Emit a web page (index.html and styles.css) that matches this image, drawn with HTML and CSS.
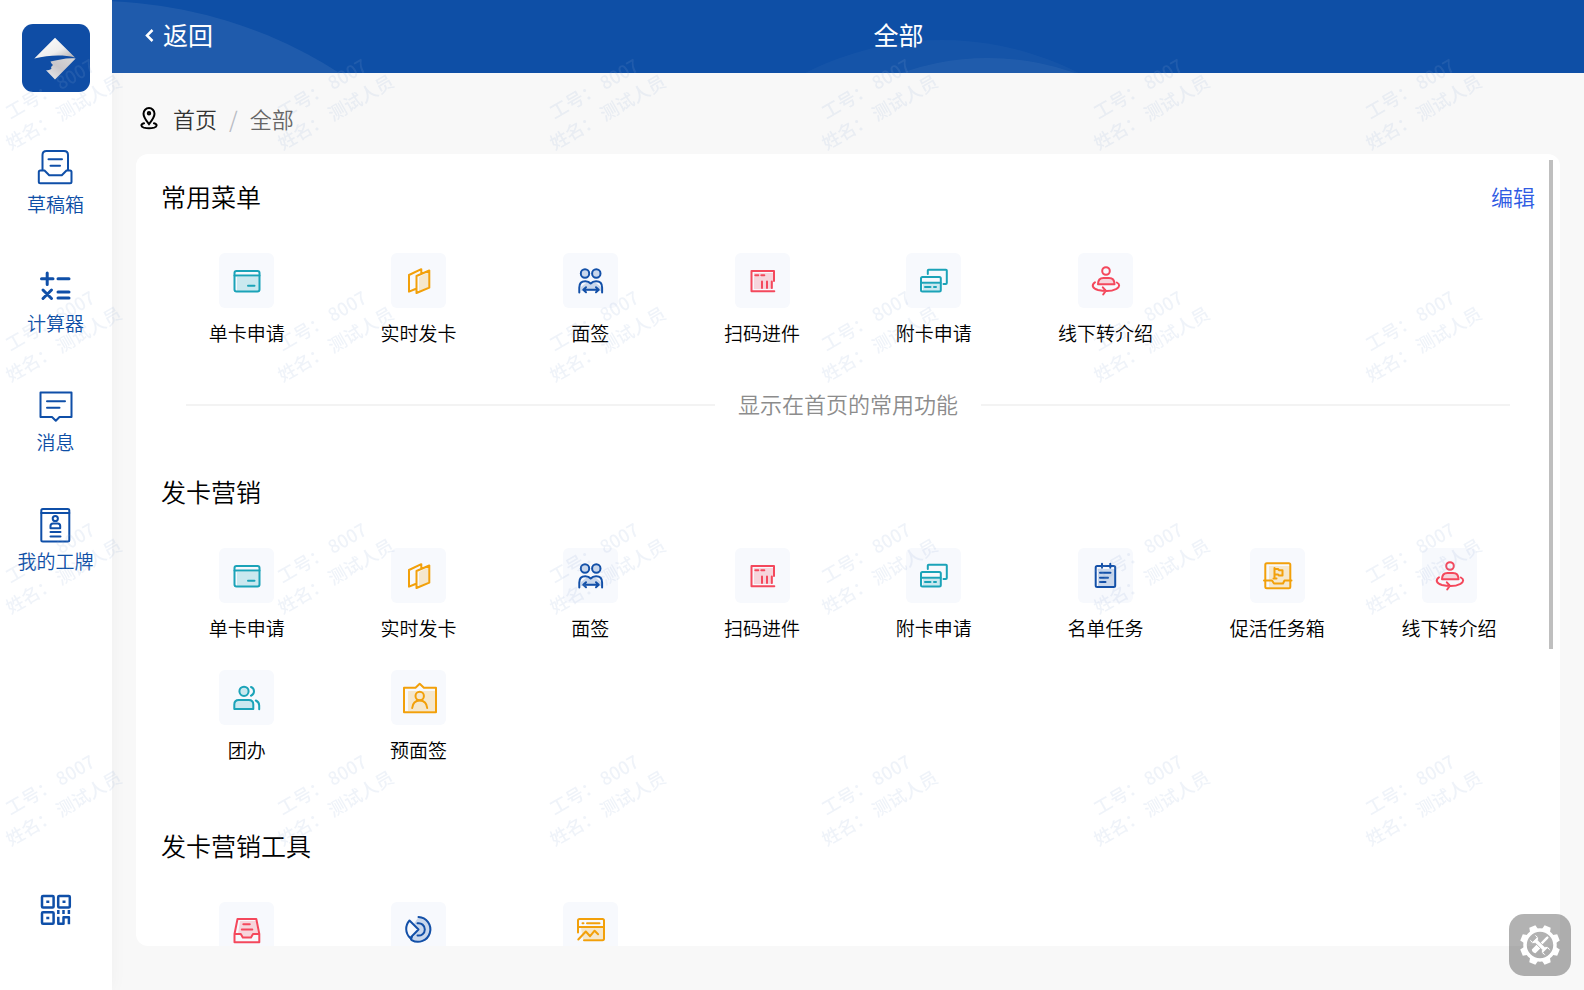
FILE: index.html
```html
<!DOCTYPE html>
<html lang="zh-CN">
<head>
<meta charset="utf-8">
<title>全部</title>
<link rel="stylesheet" href="styles.css">
</head>
<body>
<svg class="sprite" aria-hidden="true">
  <symbol id="i-card" viewBox="0 0 55 55">
    <rect class="tint" x="18" y="24" width="22" height="14"/>
    <rect x="15.5" y="18" width="25" height="20.5" rx="2"/><path d="M15.5 22.5h25M29 32.7h6.500"/>
  </symbol>
  <symbol id="i-fold" viewBox="0 0 55 55">
    <path class="tint" d="M28 24l10-5v15l-10 5z"/>
    <path d="M24.500 36l-6.500 2.700V22l12.300-5.800V20M25.500 23l12.800-5.500v17.200L25.500 40z"/>
  </symbol>
  <symbol id="i-sign" viewBox="0 0 55 55">
    <path class="tint" d="M18 38v-4l5-4h10l5 4v4z"/><circle class="tinted" cx="22" cy="20.500" r="4.200"/><circle class="tinted" cx="33.300" cy="20.500" r="4.200"/>
    <path d="M16.300 39.500V34.500q0-6.200 6-6.200q3.500 0 5.400 2.200q1.900-2.200 5.400-2.200q6 0 6 6.200v5M20.500 36.700h15M23 34.200l-2.700 2.500 2.700 2.500M33 34.200l2.700 2.500-2.700 2.500"/>
  </symbol>
  <symbol id="i-scan" viewBox="0 0 55 55">
    <path class="tint" d="M19 20h19v16H19z"/>
    <path d="M39.300 38.300H16.500V18H39v10M20.300 22.300h3M26.300 22.300h3M27 28.500V35M32 28.500V35M36.800 28.500V35"/>
  </symbol>
  <symbol id="i-cards" viewBox="0 0 55 55">
    <path class="tint" d="M17 31h17v7H17z"/>
    <path d="M21.800 21V17.500q0-.8.8-.8H40q.8 0 .8.800V30q0 1-1 1h-2.300M15 29.800h19.500M19 34h5.500M28 34h2"/><rect x="15" y="24" width="19.800" height="14.500" rx="1.500"/>
  </symbol>
  <symbol id="i-refer" viewBox="0 0 55 55">
    <circle cx="28" cy="18" r="3.800"/><path class="tinted" d="M20 31.300c0-4.500 2.500-6.300 5.500-6.300h5.500c3 0 5.500 1.800 5.500 6.300z"/>
    <path d="M17 29.300c-4 3-2.500 6.200 3 7.700 6.500 1.600 14 1.200 18.500-1.200 3.500-2 3.500-4.500 .3-6.300M24.800 34.300l3 3.400-2.600 3.800"/>
  </symbol>
  <symbol id="i-list" viewBox="0 0 55 55">
    <path class="tint" d="M20 21h17v17H20z"/><rect x="17.700" y="18" width="19.500" height="21" rx="1.500"/><path d="M24 15.800v4M32.300 15.800v4M22 24.700h10.500M22 29.700h8M22 34h5.500"/>
  </symbol>
  <symbol id="i-flag" viewBox="0 0 55 55">
    <path class="tint" d="M19 18h21v21H19z"/><rect x="15.300" y="15.300" width="25" height="25" rx="1.500"/>
    <path d="M14 32.500h8l2 3h9l1.500-3H41.500M24.500 20V30.500M23.500 30.500h3M24.500 21h3.500l1 1.200h3.500v5.300h-3.500l-1-1H24.500"/>
  </symbol>
  <symbol id="i-group" viewBox="0 0 55 55">
    <circle class="tinted" cx="25" cy="21.300" r="4.600"/><path class="tinted" d="M15.300 39V34.500q0-4.500 4.500-4.500h10q4.500 0 4.500 4.500V39z"/><path d="M32 17c4 1.300 4 7.300 0 8.700M36.800 30.500q3.400 1.500 3.400 5v3.800"/>
  </symbol>
  <symbol id="i-pre" viewBox="0 0 55 55">
    <path class="tint" d="M17 21h27v20H17z"/><path d="M13 17.700h11.500l4.200-4 4.200 4H45v24.600H13z"/><circle cx="28.700" cy="26" r="4.200"/><path d="M21.200 38c.5-5 3.500-7.600 7.500-7.600s7 2.600 7.500 7.600"/>
  </symbol>
  <symbol id="i-tray" viewBox="0 0 55 55">
    <path class="tint" d="M21 19h16l2 12-5 1-2 3h-8l-2-3h-3z"/><path d="M15.500 32l3-15h18.800l3 15v8.300H15.500V32h6.300l2 3.500h8.200l2-3.500h6.300M24.300 22.300h6.500M22.800 27.500h10.500"/>
  </symbol>
  <symbol id="i-pie" viewBox="0 0 55 55">
    <path class="tint" d="M27.500 15a12.500 12.500 0 1 1-7 22.500l7-10-5-5z"/><path d="M27.500 15a12.400 12.400 0 1 1-6.800 23.100M18.500 18.500c-4.500 5-4.500 12.500 .7 17.500l8.300-8.500zM26.500 21.300a6.200 6.200 0 1 1 0 12.200M21.500 33.500l-1.500 4"/>
  </symbol>
  <symbol id="i-chart" viewBox="0 0 55 55">
    <path class="tint" d="M18 26h22v11H20z"/><path d="M15 30.500V18.500q0-1.500 1.500-1.500h23q1.500 0 1.500 1.500V36.500q0 1.700-1.500 1.700H21M15 25h26M19.500 21.300h1M24 21.300h12.500M15.300 37.500l7.500-8 4.300 4.700 4.500-5.500 3.500 3.500"/>
  </symbol>
</svg>

<div class="app">
  <aside class="sidebar">
    <svg class="logo" viewBox="0 0 68 68" role="img" aria-label="logo">
      <defs>
        <linearGradient id="silver" x1="0" y1="0" x2="1" y2="1"><stop offset="0" stop-color="#fff"/><stop offset=".6" stop-color="#eee"/><stop offset="1" stop-color="#aaa8ac"/></linearGradient>
        <linearGradient id="silver2" x1="0" y1="1" x2="1" y2="0"><stop offset="0" stop-color="#eee"/><stop offset=".5" stop-color="#c9c6ca"/><stop offset="1" stop-color="#d8d8d8"/></linearGradient>
      </defs>
      <rect width="68" height="68" rx="11" fill="#0f4da5"/>
      <path fill="url(#silver)" d="M33 13.700L53 33.500C41 30.500 27 31 12.300 34.500z"/>
      <path fill="url(#silver2)" d="M53.700 34.500L33 55.500l-9-9.200c2 0 4-.5 5.500-1.500-1-1.500 0-2.500 1.500-3.800-1-1-2-2-2.500-3.500C36 36 45 33.500 53.700 34.500z"/>
    </svg>
    <nav class="side-nav">
      <button class="side-item" type="button">
        <svg class="side-icon" viewBox="0 0 38 38"><path d="M6.500 22.500V7q0-4 4-4h17.500q4 0 4 4v15.500M12.500 11.300h13.500M14.500 17.700h9.500M2.800 24q0-1.500 1.500-1.500h4.200l4.700 4.700h12.600l4.700-4.700h3.500q1.500 0 1.500 1.500v9.800q0 1.500-1.500 1.500H4.300q-1.500 0-1.500-1.500z"/></svg>
        <span>草稿箱</span>
      </button>
      <button class="side-item" type="button">
        <svg class="side-icon bold" viewBox="0 0 38 38"><path d="M5.500 11.700H17M11.200 6v11.500M22 11.700h11M7 23l8.500 8.500M15.500 23L7 31.500M22 25h11M22 31h11"/></svg>
        <span>计算器</span>
      </button>
      <button class="side-item" type="button">
        <svg class="side-icon" viewBox="0 0 38 38"><path d="M4.500 6.500h31V31H23.500l-3.700 3.700L16 31H4.500zM11 15.300h18M11 21.700h12.500"/></svg>
        <span>消息</span>
      </button>
      <button class="side-item" type="button">
        <svg class="side-icon" viewBox="0 0 38 38"><rect x="5.300" y="4" width="28" height="32.500" rx="1.500"/><path d="M5.300 8h28M14.500 27h10M14.500 31.500h10"/><circle cx="19.300" cy="13.500" r="2.600"/><path d="M14.500 23.200v-2.200q0-2.500 2.500-2.500h4.700q2.500 0 2.500 2.500v2.200z"/></svg>
        <span>我的工牌</span>
      </button>
    </nav>
    <button class="qr" type="button" aria-label="二维码">
      <svg viewBox="0 0 32 32"><rect x="2" y="2" width="11.600" height="11.600" rx="1"/><rect x="18.200" y="2" width="11.600" height="11.600" rx="1"/><rect x="2" y="18.200" width="11.600" height="11.600" rx="1"/><path d="M6.300 7.800h3M22.500 7.800h3M6.300 24h3M18.300 16v4M23.500 16v4M28.900 16v4M18.300 22.800v7h5.200v-6.500h5.400v7"/></svg>
    </button>
  </aside>

  <div class="main">
    <header class="topbar">
      <svg class="topbar-art" aria-hidden="true"><circle cx="-17" cy="452" r="451" fill-opacity=".07"/><circle cx="830" cy="340" r="300" fill-opacity=".03"/><circle cx="876" cy="318" r="260" fill-opacity=".05"/></svg>
      <button class="back" type="button"><svg viewBox="0 0 10 18"><path d="M8.500 5L3 10.500l5.500 5.500"/></svg>返回</button>
      <h1 class="page-title">全部</h1>
    </header>

    <nav class="crumbs" aria-label="breadcrumb">
      <svg viewBox="0 0 20 24"><path d="M10 18.200C7 14.500 4.500 11 4.500 7.800a5.500 5.700 0 0 1 11 0C15.500 11 13 14.500 10 18.200z"/><circle cx="10" cy="7.300" r="1.200"/><path d="M5 17.300c-3.500 1-3.300 3.300-.2 4.300 3.300.9 7.100.9 10.400 0 3.100-1 3.300-3.300-.2-4.300"/></svg>
      <a href="#">首页</a><span class="sep">/</span><span class="here">全部</span>
    </nav>

    <main class="card">
      <div class="scroll">
        <section class="group">
          <div class="group-head"><h2>常用菜单</h2><button class="edit" type="button">编辑</button></div>
          <div class="grid">
            <button class="item teal" type="button"><svg><use href="#i-card"/></svg><span>单卡申请</span></button>
            <button class="item amber" type="button"><svg><use href="#i-fold"/></svg><span>实时发卡</span></button>
            <button class="item blue" type="button"><svg><use href="#i-sign"/></svg><span>面签</span></button>
            <button class="item red" type="button"><svg><use href="#i-scan"/></svg><span>扫码进件</span></button>
            <button class="item teal" type="button"><svg><use href="#i-cards"/></svg><span>附卡申请</span></button>
            <button class="item red" type="button"><svg><use href="#i-refer"/></svg><span>线下转介绍</span></button>
          </div>
          <p class="divider"><span>显示在首页的常用功能</span></p>
        </section>

        <section class="group">
          <div class="group-head"><h2>发卡营销</h2></div>
          <div class="grid">
            <button class="item teal" type="button"><svg><use href="#i-card"/></svg><span>单卡申请</span></button>
            <button class="item amber" type="button"><svg><use href="#i-fold"/></svg><span>实时发卡</span></button>
            <button class="item blue" type="button"><svg><use href="#i-sign"/></svg><span>面签</span></button>
            <button class="item red" type="button"><svg><use href="#i-scan"/></svg><span>扫码进件</span></button>
            <button class="item teal" type="button"><svg><use href="#i-cards"/></svg><span>附卡申请</span></button>
            <button class="item blue" type="button"><svg><use href="#i-list"/></svg><span>名单任务</span></button>
            <button class="item amber" type="button"><svg><use href="#i-flag"/></svg><span>促活任务箱</span></button>
            <button class="item red" type="button"><svg><use href="#i-refer"/></svg><span>线下转介绍</span></button>
            <button class="item teal" type="button"><svg><use href="#i-group"/></svg><span>团办</span></button>
            <button class="item amber" type="button"><svg><use href="#i-pre"/></svg><span>预面签</span></button>
          </div>
        </section>

        <section class="group">
          <div class="group-head"><h2>发卡营销工具</h2></div>
          <div class="grid">
            <button class="item red" type="button"><svg><use href="#i-tray"/></svg></button>
            <button class="item blue" type="button"><svg><use href="#i-pie"/></svg></button>
            <button class="item amber" type="button"><svg><use href="#i-chart"/></svg></button>
          </div>
        </section>
      </div>
      <div class="thumb"></div>
    </main>
  </div>
</div>

<svg class="watermark" aria-hidden="true">
  <defs>
    <pattern id="wm" width="272" height="232" patternUnits="userSpaceOnUse">
      <g transform="translate(67 118) rotate(-30)">
        <text y="-27">工号： 8007</text>
        <text>姓名： 测试人员</text>
      </g>
    </pattern>
  </defs>
  <rect width="100%" height="100%" fill="url(#wm)"/>
</svg>

<button class="tools" type="button" aria-label="设置">
  <svg viewBox="0 0 42 42">
    <circle cx="21" cy="21" r="15" fill="none" stroke="#fff" stroke-width="3.500"/>
    <g fill="#fff">
      <path id="tooth" d="M16.500 6.500L17.700 1h6.600l1.200 5.500z" transform="rotate(22.500 21 21)"/>
      <use href="#tooth" transform="rotate(45 21 21)"/><use href="#tooth" transform="rotate(90 21 21)"/><use href="#tooth" transform="rotate(135 21 21)"/><use href="#tooth" transform="rotate(180 21 21)"/><use href="#tooth" transform="rotate(225 21 21)"/><use href="#tooth" transform="rotate(270 21 21)"/><use href="#tooth" transform="rotate(315 21 21)"/>
      <g transform="rotate(45 21 21)"><path d="M19.800 20v-9l.4-1.500h1.600l.4 1.500v9zM18.400 23h5.200v7q-2.600 2-5.200 0z"/></g>
      <g transform="rotate(-45 21 21)"><path stroke="#afafaf" stroke-width=".8" d="M19 16.500q-2.500-1-2.500-3.700 0-2 1.700-3.500v4h5.600v-4q1.700 1.500 1.700 3.500 0 2.700-2.500 3.700v9q2.500 1 2.500 3.700 0 2-1.700 3.500v-4h-5.600v4q-1.700-1.500-1.700-3.500 0-2.700 2.500-3.700z"/></g>
    </g>
  </svg>
</button>
</body>
</html>
```
FILE: styles.css
```css
* { box-sizing: border-box; }
body {
  margin: 0;
  color: #000;
  background: #f8f8f8;
  font-family: "Noto Sans CJK SC", sans-serif;
  font-weight: 350;
  overflow: hidden;
}
button {
  margin: 0;
  padding: 0;
  border: 0;
  background: none;
  font: inherit;
  color: inherit;
  cursor: pointer;
}
h1, h2, p { margin: 0; font-weight: inherit; }
svg { display: block; flex: none; }
.sprite { position: absolute; width: 0; height: 0; }

.app { display: flex; height: 100vh; }

/* Sidebar */
.sidebar {
  flex: none;
  width: 112px;
  display: flex;
  flex-direction: column;
  align-items: center;
  padding: 24px 1px 64px 0;
  background: #fff;
  box-shadow: 0 0 16px rgba(0, 0, 0, .04);
  color: #0e4fa6;
  font-size: 19px;
  line-height: 28px;
}
.logo { width: 68px; height: 68px; }
.side-nav { display: flex; flex-direction: column; gap: 49px; margin-top: 56px; }
.side-item { display: flex; flex-direction: column; align-items: center; gap: 4px; }
.side-icon, .qr svg {
  fill: none;
  stroke: #0f4fa8;
  stroke-width: 2;
  stroke-linecap: round;
  stroke-linejoin: round;
}
.side-icon { width: 38px; height: 38px; }
.side-icon.bold { stroke-width: 3; }
.qr { margin-top: auto; }
.qr svg { width: 32px; height: 32px; stroke-width: 2.500; stroke-linecap: butt; }

/* Header */
.main { flex: 1; min-width: 0; display: flex; flex-direction: column; }
.topbar {
  position: relative;
  flex: none;
  display: flex;
  align-items: center;
  height: 73px;
  padding: 0 0 5px 32px;
  background: #0e4fa6;
  color: #fff;
  font-size: 25px;
  font-weight: 400;
  overflow: hidden;
}
.topbar-art { position: absolute; inset: 0; width: 100%; height: 100%; fill: #fff; }
.back { position: relative; display: flex; align-items: center; gap: 9px; }
.back svg { width: 10px; height: 18px; fill: none; stroke: #fff; stroke-width: 2.500; }
.page-title { position: relative; flex: 1; text-align: center; font-size: 25px; }

/* Breadcrumb */
.crumbs {
  flex: none;
  display: flex;
  align-items: center;
  height: 81px;
  padding: 8px 27px 0;
  font-size: 22px;
  line-height: 32px;
  color: #333;
}
.crumbs svg {
  width: 20px;
  height: 24px;
  margin-right: 14px;
  fill: none;
  stroke: #000;
  stroke-width: 2;
  stroke-linecap: round;
}
.crumbs a { color: inherit; text-decoration: none; }
.sep { margin: 0 12px; color: #b8bcc4; }
.here { color: #666; }

/* Content card */
.card {
  position: relative;
  flex: 1;
  min-height: 0;
  margin: 0 24px 44px;
  border-radius: 12px;
  background: #fff;
  overflow: hidden;
}
.scroll { height: 100%; padding: 24px 25px; overflow: hidden; }
.thumb {
  position: absolute;
  top: 6px;
  right: 7px;
  width: 4px;
  height: 61.8%;
  background: #bfbfbf;
}
.group { margin-bottom: 63px; }
.group:first-child { margin-bottom: 49px; }
.group-head {
  display: flex;
  align-items: center;
  justify-content: space-between;
  height: 35px;
  margin-bottom: 40px;
}
.group-head h2 { font-size: 25px; }
.edit { color: #2f5be3; font-size: 22px; line-height: 32px; }
.grid { display: grid; grid-template-columns: repeat(8, 1fr); row-gap: 28px; }
.item {
  display: flex;
  flex-direction: column;
  align-items: center;
  gap: 11px;
  font-size: 19px;
  line-height: 28px;
}
.item svg {
  width: 55px;
  height: 55px;
  border-radius: 6px;
  background: #f7f9fd;
  fill: none;
  stroke: currentColor;
  stroke-width: 2;
  stroke-linejoin: round;
  stroke-linecap: round;
}
.item span { color: #000; }
.tint { fill: currentColor; fill-opacity: .2; stroke: none; }
.tinted { fill: currentColor; fill-opacity: .2; }
.teal { color: #1ba3b8; }
.amber { color: #f2a00a; }
.blue { color: #1350a8; }
.red { color: #f4485c; }

.divider {
  display: flex;
  align-items: center;
  gap: 23px;
  margin: 39px 25px 0;
  color: #8c8c8c;
  font-size: 22px;
  line-height: 34px;
}
.divider span { padding-bottom: 4px; }
.divider::before, .divider::after { content: ""; flex: 1; height: 2px; background: #f3f3f3; }

/* Overlays */
.watermark {
  position: fixed;
  inset: 0;
  width: 100%;
  height: calc(100% - 44px);
  pointer-events: none;
}
.watermark text {
  fill: rgba(140, 170, 215, .14);
  font-size: 18px;
  font-weight: 500;
  text-anchor: middle;
}
.tools {
  position: fixed;
  right: 13px;
  bottom: 14px;
  display: grid;
  place-items: center;
  width: 62px;
  height: 62px;
  border-radius: 15px;
  background: rgba(0, 0, 0, .3);
}
.tools svg { width: 42px; height: 42px; }
```
